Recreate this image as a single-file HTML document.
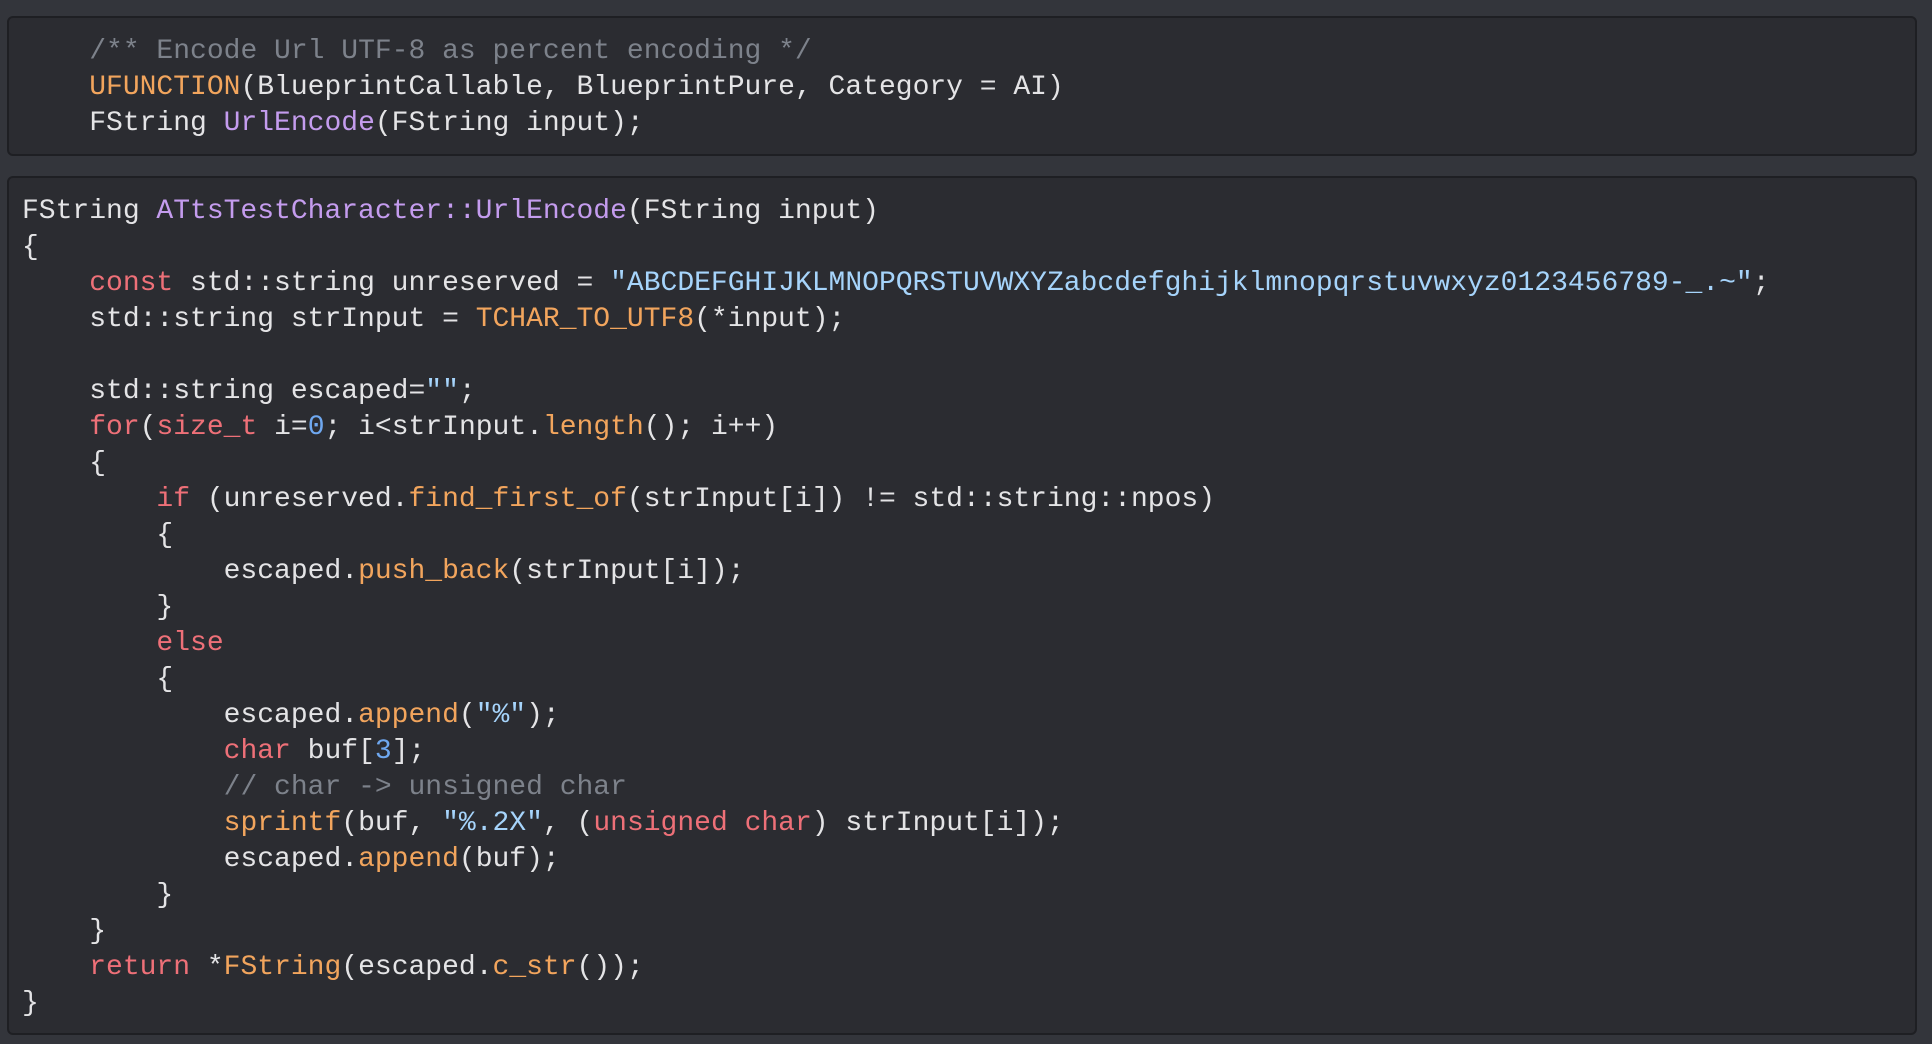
<!DOCTYPE html>
<html><head><meta charset="utf-8"><style>
html,body{margin:0;padding:0;}
body{width:1932px;height:1044px;background:#33353b;position:relative;overflow:hidden;}
.box{position:absolute;left:7px;width:1910px;background:#2b2c31;border:2px solid #1e1f23;border-radius:6px;box-sizing:border-box;}
pre{margin:0;padding:16px 0 0 13px;font-family:"Liberation Mono",monospace;font-size:28px;letter-spacing:0px;line-height:36px;color:#e4e4e6;}
.c{color:#7d828b}.o{color:#f2a55d}.p{color:#c49cee}.r{color:#ee7078}.s{color:#a6d4fb}.n{color:#6fa8f0}
</style></head><body>
<div class="box" style="top:16px;height:140px;"><pre>    <span class="c">/** Encode Url UTF-8 as percent encoding */</span>
    <span class="o">UFUNCTION</span>(BlueprintCallable, BlueprintPure, Category = AI)
    FString <span class="p">UrlEncode</span>(FString input);</pre></div>
<div class="box" style="top:176px;height:859px;"><pre>FString <span class="p">ATtsTestCharacter::UrlEncode</span>(FString input)
{
    <span class="r">const</span> std::string unreserved = <span class="s">"ABCDEFGHIJKLMNOPQRSTUVWXYZabcdefghijklmnopqrstuvwxyz0123456789-_.~"</span>;
    std::string strInput = <span class="o">TCHAR_TO_UTF8</span>(*input);

    std::string escaped=<span class="s">""</span>;
    <span class="r">for</span>(<span class="r">size_t</span> i=<span class="n">0</span>; i&lt;strInput.<span class="o">length</span>(); i++)
    {
        <span class="r">if</span> (unreserved.<span class="o">find_first_of</span>(strInput[i]) != std::string::npos)
        {
            escaped.<span class="o">push_back</span>(strInput[i]);
        }
        <span class="r">else</span>
        {
            escaped.<span class="o">append</span>(<span class="s">"%"</span>);
            <span class="r">char</span> buf[<span class="n">3</span>];
            <span class="c">// char -&gt; unsigned char</span>
            <span class="o">sprintf</span>(buf, <span class="s">"%.2X"</span>, (<span class="r">unsigned char</span>) strInput[i]);
            escaped.<span class="o">append</span>(buf);
        }
    }
    <span class="r">return</span> *<span class="o">FString</span>(escaped.<span class="o">c_str</span>());
}</pre></div>
</body></html>
